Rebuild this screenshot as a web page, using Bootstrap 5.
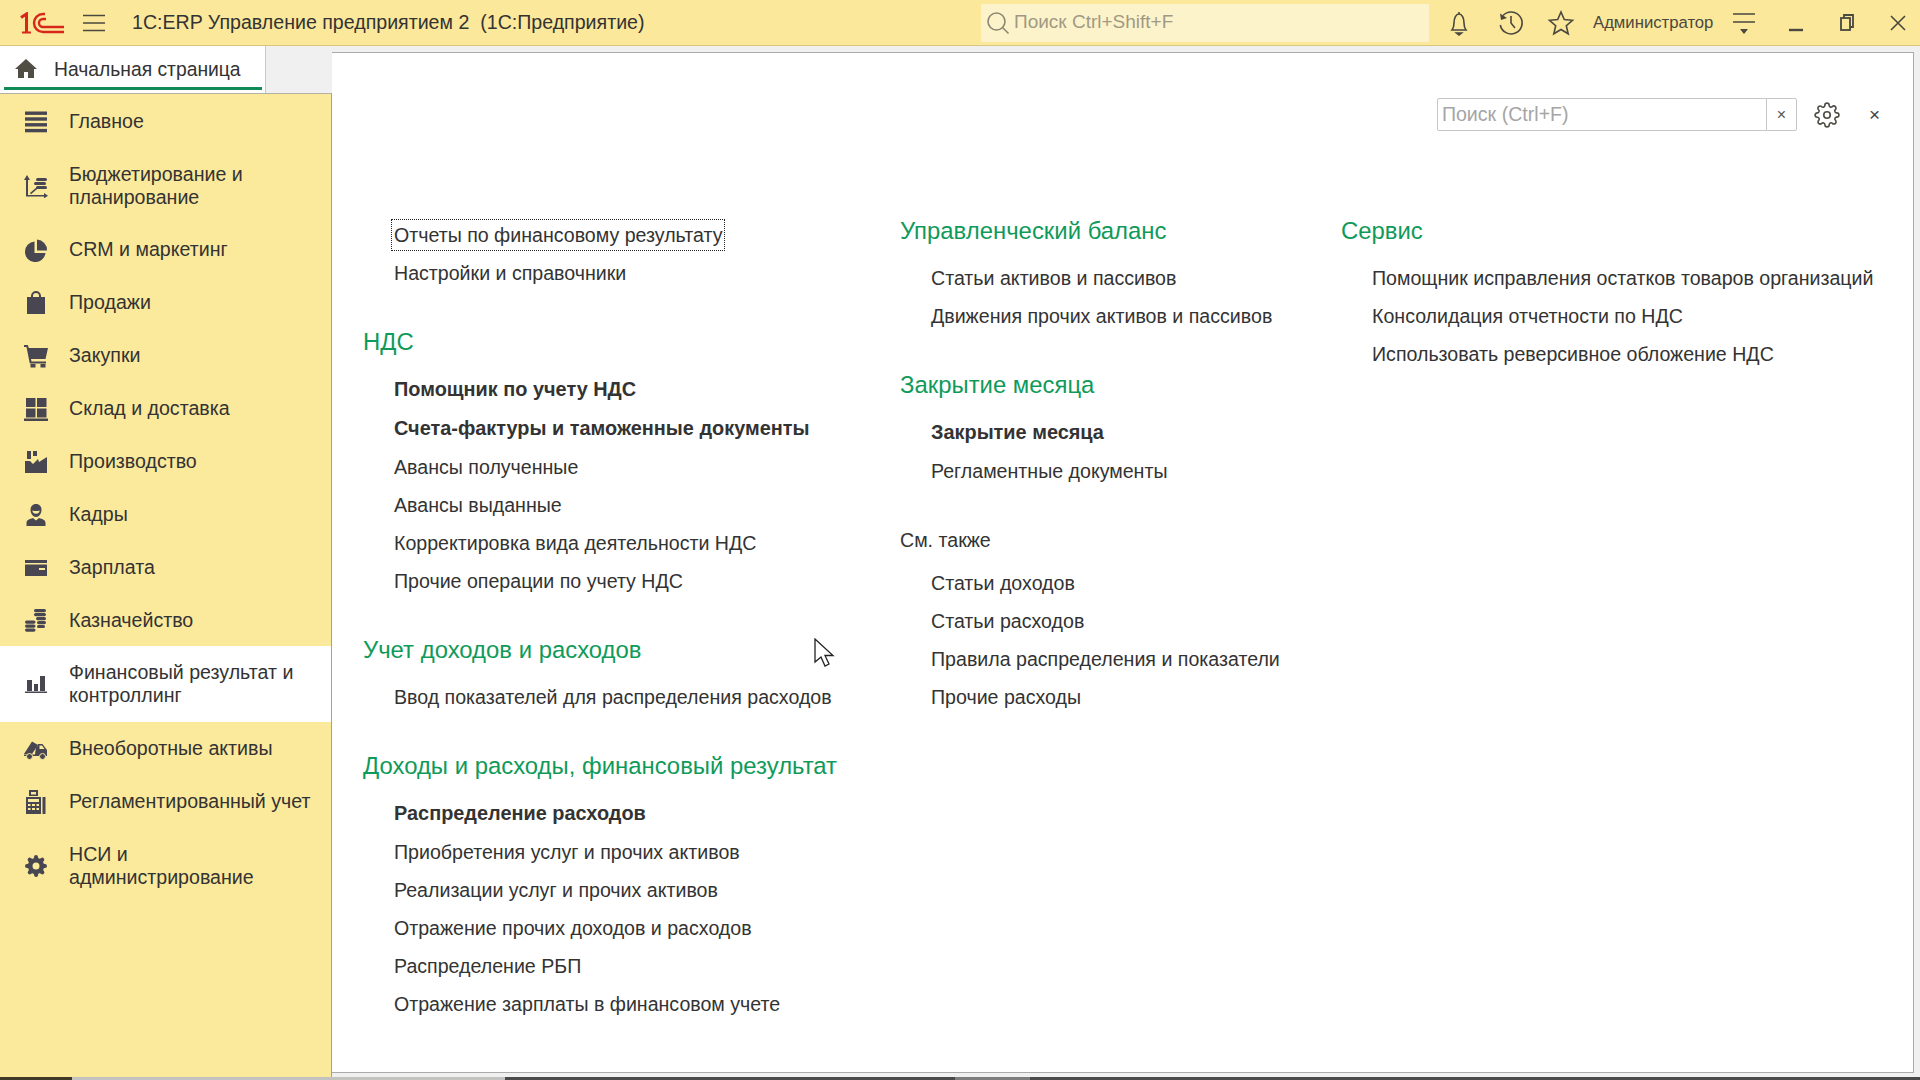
<!DOCTYPE html>
<html lang="ru">
<head>
  <meta charset="UTF-8" />
  <title>1С:ERP Управление предприятием 2</title>
  <link href="https://cdn.jsdelivr.net/npm/bootstrap@5.3.0/dist/css/bootstrap.min.css" rel="stylesheet"/>
  <script src="https://cdn.jsdelivr.net/npm/bootstrap@5.3.3/dist/js/bootstrap.bundle.min.js"></script>
  <style>
    html, body { height: 100%; }
    body { font-family: "Liberation Sans", Arial, sans-serif; color: #333; font-size: 19.6px; overflow: hidden; background: #fff; }
    .app-shell { height: 1080px; width: 1920px; position: relative; }

    .top-bar { height: 46px; background: #fbe89b; border-bottom: 1px solid #d9c77f; padding-left: 20px; }
    .top-logo { width: 44px; height: 22px; }
    .top-burger { width: 22px; height: 18px; margin-left: 19px; }
    .top-title { margin-left: 27px; font-size: 19.6px; white-space: pre; color: #333; width: 522px; }
    .top-search { width: 448px; height: 38px; margin-left: 327px; background: #fdf3cb; padding-left: 5px; color: #a09a84; font-size: 19px; }
    .top-search svg { width: 24px; height: 24px; margin-right: 4px; }
    .top-ico { width: 28px; height: 28px; color: #4a483f; flex: none; }
    .top-user { font-size: 16.7px; color: #4a483f; }

    .work-area { height: 1031px; }
    .left-col { width: 332px; }
    .tab-row { height: 48px; background: #f0f0f0; border-bottom: 1px solid #b4b1a4; }
    .home-tab { width: 266px; background: #fff; border-right: 1px solid #c9c9c9; padding: 2px 0 0 15px; position: relative; font-size: 19.3px; }
    .home-tab::after { content: ""; position: absolute; left: 4px; right: 3px; bottom: 3px; height: 3px; background: #128a57; }
    .home-tab svg { width: 22px; height: 22px; margin: -3px 17px 0 0; }

    .side-menu { background: #fbe99c; border-right: 1px solid #a6a28c; flex: 1; }
    .side-link { background: transparent; border: 0; border-radius: 0 !important; padding: 14.5px 20px 14.5px 24px; line-height: 23.5px; color: #333; font-size: 19.6px; }
    .side-link:first-child { padding-top: 15.5px; }
    .side-link:nth-child(2) { padding-bottom: 13.5px; }
    .side-link.active { background: #fff; color: #333; }
    .side-link svg { width: 24px; height: 24px; flex: none; margin-right: 21px; color: #484650; }

    .right-col { background: #f0f0f0; padding-top: 6px; min-width: 0; }
    .main-panel { background: #fff; border: 1px solid #aaa; border-left: 0; margin-right: 6px; height: 1021px; padding-top: 45px; }
    .page-tools { height: 33px; padding-right: 33px; }
    .find-box { width: 360px; height: 33px; }
    .find-box .form-control { border-color: #c6c6c6; border-radius: 2px 0 0 2px; padding: 0 4px; font-size: 19.6px; color: #999; }
    .find-box .form-control::placeholder { color: #a5a5a5; }
    .find-box .btn { width: 31px; padding: 0; border-color: #c6c6c6; border-radius: 0 2px 2px 0; color: #555; font-size: 16px; line-height: 1; }
    .tool-gear { width: 26px; height: 26px; margin-left: 17px; color: #4f4d44; }
    .tool-close { margin-left: 29px; color: #444; font-size: 19px; line-height: 1; }

    .menu-cols { padding-top: 85px; }
    .menu-col1 { width: 537px; padding-left: 31px; }
    .menu-col2 { width: 441px; padding-left: 31px; }
    .menu-col3 { padding-left: 31px; }
    .sec-head { height: 30px; line-height: 30px; font-size: 23.9px; color: #109a5a; margin: 34.5px 0 13.5px; white-space: nowrap; }
    .sec-head.first { margin-top: 0; margin-bottom: 13px; }
    .sec-plain { height: 30px; line-height: 30px; font-size: 19.6px; color: #333; margin: 34.5px 0 9.5px; }
    .menu-link { display: block; height: 38px; line-height: 38px; padding-left: 31px; color: #333; text-decoration: none; white-space: nowrap; }
    .menu-link.strong { font-weight: 700; font-size: 19.9px; height: 39px; }
    .focus-text { outline: 1px dotted #222; outline-offset: 2px; padding: 2px 0; }

    .task-strip { height: 3px; background: #4a4a4a; position: absolute; left: 0; right: 0; bottom: 0; }
    .strip-a { width: 72px; background: #3f3a27; }
    .strip-b { width: 433px; background: #c2c2c0; }
    .strip-c { width: 450px; }
    .strip-d { width: 75px; background: #7d7d7d; }
    .mouse-arrow { position: absolute; left: 813px; top: 638px; width: 22px; height: 30px; }
  </style>
</head>
<body>
  <div class="app-shell">
    <div class="top-bar d-flex align-items-center">
      <svg class="top-logo" viewBox="0 0 44 22" fill="none" stroke="#d7261a">
        <path d="M1 5.500L6.500 2v19" stroke-width="3"/>
        <path d="M2 20.500h9" stroke-width="2"/>
        <path d="M25 2h-2a9 9 0 0 0 0 18h21" stroke-width="2.400"/>
        <path d="M26 7h-3a4 4 0 0 0 0 8h21" stroke-width="2.400"/>
      </svg>
      <svg class="top-burger" viewBox="0 0 22 18" stroke="#4a483f" stroke-width="1.5"><path d="M0 1.500h22M0 9h22M0 16.500h22"/></svg>
      <div class="top-title">1С:ERP Управление предприятием 2  (1С:Предприятие)</div>
      <div class="top-search d-flex align-items-center">
        <svg viewBox="0 0 24 24" fill="none" stroke="#8b8671" stroke-width="1.600"><circle cx="10.500" cy="10.500" r="8.500"/><path d="M16.500 16.500l6 6"/></svg>
        Поиск Ctrl+Shift+F
      </div>
      <svg class="top-ico" style="margin-left:16px" viewBox="0 0 28 28" fill="none" stroke="currentColor" stroke-width="1.600"><path d="M14 3v2M7 21c1.500-2 2-3 2-7 0-5 2-9 5-9s5 4 5 9c0 4 .5 5 2 7z"/><path d="M11.500 24h5l-2.500 2z" fill="currentColor"/></svg>
      <svg class="top-ico" style="margin-left:24px" viewBox="0 0 28 28" fill="none" stroke="currentColor" stroke-width="1.600"><path d="M6 6.500A11 11 0 1 1 3.300 16"/><path d="M3 4.500l1 6.500 6-2z" fill="currentColor" stroke="none"/><path d="M14 7v7l4 5"/></svg>
      <svg class="top-ico" style="margin-left:22px" viewBox="0 0 28 28" fill="none" stroke="currentColor" stroke-width="1.600"><path d="M14 3l3.300 7.600 8.200.7-6.200 5.400 1.900 8.100-7.200-4.300-7.200 4.300 1.900-8.100-6.200-5.400 8.200-.7z"/></svg>
      <div class="top-user" style="margin-left:18px">Администратор</div>
      <svg class="top-ico" style="margin-left:17px" viewBox="0 0 28 28" fill="none" stroke="currentColor" stroke-width="1.600"><path d="M3 5h22M3 13h22"/><path d="M10 20h8l-4 5z" fill="currentColor" stroke="none"/></svg>
      <svg class="top-ico" style="margin-left:24px" viewBox="0 0 28 28" fill="none" stroke="currentColor" stroke-width="2.400"><path d="M7 21h14"/></svg>
      <svg class="top-ico" style="margin-left:23px" viewBox="0 0 28 28" fill="none" stroke="currentColor" stroke-width="1.800"><path d="M11 9V6h9v12h-3"/><rect x="8" y="9" width="9" height="12"/></svg>
      <svg class="top-ico" style="margin-left:23px" viewBox="0 0 28 28" fill="none" stroke="currentColor" stroke-width="1.600"><path d="M7 7l14 14M21 7L7 21"/></svg>
    </div>

    <div class="work-area d-flex">
      <div class="left-col d-flex flex-column">
        <div class="tab-row d-flex">
          <div class="home-tab d-flex align-items-center">
            <svg viewBox="0 0 22 22" fill="#4f4d44"><path d="M11 1L0 11h3v9h6v-6h4v6h6v-9h3z"/></svg>
            Начальная страница
          </div>
        </div>
        <div class="side-menu list-group list-group-flush">
          <a class="side-link list-group-item d-flex align-items-center" href="#">
            <svg viewBox="0 0 24 24" fill="currentColor"><rect x="1" y="1.500" width="22" height="3.400"/><rect x="1" y="7.300" width="22" height="3.400"/><rect x="1" y="13.100" width="22" height="3.400"/><rect x="1" y="18.900" width="22" height="3.400"/></svg>
            Главное
          </a>
          <a class="side-link list-group-item d-flex align-items-center" href="#">
            <svg viewBox="0 0 24 24" fill="currentColor"><path d="M3 1l3 5H4v15h16v-2l4 2.700-4 2.700v-2H2V6H0z"/><path d="M6 19l7-6 1 1.200-7 6z"/><rect x="12" y="4" width="11" height="3" rx="1.500"/><rect x="10" y="8" width="12" height="3" rx="1.500"/><rect x="12" y="12" width="11" height="3" rx="1.500"/></svg>
            <span>Бюджетирование и<br>планирование</span>
          </a>
          <a class="side-link list-group-item d-flex align-items-center" href="#">
            <svg viewBox="0 0 24 24" fill="currentColor"><path d="M10.500 3.500A10.300 10.300 0 1 0 21.500 15H10.500z"/><path d="M13 1.500V12.500H23A10.500 10.500 0 0 0 13 1.500z"/></svg>
            CRM и маркетинг
          </a>
          <a class="side-link list-group-item d-flex align-items-center" href="#">
            <svg viewBox="0 0 24 24" fill="currentColor"><path d="M3 6h18v17H3z"/><path d="M8 10V5a4 4 0 0 1 8 0v5" fill="none" stroke="currentColor" stroke-width="2"/></svg>
            Продажи
          </a>
          <a class="side-link list-group-item d-flex align-items-center" href="#">
            <svg viewBox="0 0 24 24" fill="currentColor"><path d="M0 1h3.800l1 3H24l-2.500 11H7l.5 2.500H22v2H5.800L2.500 3H0z"/><rect x="6.500" y="20" width="5" height="3.500"/><rect x="16.500" y="20" width="5" height="3.500"/></svg>
            Закупки
          </a>
          <a class="side-link list-group-item d-flex align-items-center" href="#">
            <svg viewBox="0 0 24 24" fill="currentColor"><rect x="2" y="1" width="9.500" height="9"/><rect x="13" y="1" width="9.500" height="9"/><rect x="2" y="11.500" width="9.500" height="9"/><rect x="13" y="11.500" width="9.500" height="9"/><rect y="21.500" width="24" height="2.500"/></svg>
            Склад и доставка
          </a>
          <a class="side-link list-group-item d-flex align-items-center" href="#">
            <svg viewBox="0 0 24 24" fill="currentColor"><rect x="3" y="1" width="4" height="8"/><rect x="9" y="1" width="4" height="5"/><path d="M1 23V11h5l3 3 5-5 1 3 8-5v16z"/></svg>
            Производство
          </a>
          <a class="side-link list-group-item d-flex align-items-center" href="#">
            <svg viewBox="0 0 24 24" fill="currentColor"><path d="M12 1c3.500 0 5.500 2.500 5.500 6s-2.500 7-5.500 7-5.500-3.500-5.500-7S8.500 1 12 1z"/><path d="M8.500 8.500c1 3 6 3 7 0v-1c-2 .7-5 .7-7 0z" fill="#fbe99c"/><path d="M2.500 23v-3c0-3 3-4 6.500-5l3 2.500 3-2.500c3.500 1 6.500 2 6.500 5v3z"/></svg>
            Кадры
          </a>
          <a class="side-link list-group-item d-flex align-items-center" href="#">
            <svg viewBox="0 0 24 24" fill="currentColor"><rect x="1" y="4" width="22" height="3"/><path d="M1 8.500h22V20H1zm14 3.500v2h6v-2z" fill-rule="evenodd"/></svg>
            Зарплата
          </a>
          <a class="side-link list-group-item d-flex align-items-center" href="#">
            <svg viewBox="0 0 24 24" fill="currentColor"><rect x="10" y="0" width="12" height="3.200" rx="1.600"/><rect x="10" y="4" width="12" height="3.200" rx="1.600"/><rect x="12" y="8" width="10" height="3.200" rx="1.600"/><rect x="1" y="11.500" width="10.500" height="3.200" rx="1.600"/><rect x="1" y="15.500" width="10.500" height="3.200" rx="1.600"/><rect x="1" y="19.500" width="10.500" height="3.200" rx="1.600"/><rect x="13" y="12" width="9" height="3.200" rx="1.600"/><rect x="13" y="16" width="8" height="3" rx="1.500"/></svg>
            Казначейство
          </a>
          <a class="side-link list-group-item active d-flex align-items-center" href="#">
            <svg viewBox="0 0 24 24" fill="currentColor"><rect x="3" y="8" width="5" height="11"/><rect x="10" y="12" width="4" height="7"/><rect x="16" y="4" width="5" height="15"/><rect x="1" y="19.500" width="22" height="1.500"/></svg>
            <span>Финансовый результат и<br>контроллинг</span>
          </a>
          <a class="side-link list-group-item d-flex align-items-center" href="#">
            <svg viewBox="0 0 24 24" fill="currentColor"><path d="M0 17L8 4.500l6 3.500-6 9z"/><path d="M12 10h1l1-3h4.500L23 13v6H0v-1.500h11z"/><path d="M15.500 8.500v3.500h5l-2.500-3.500z" fill="#fbe99c"/><circle cx="5.500" cy="19.500" r="3" stroke="#fbe99c"/><circle cx="18.500" cy="19.500" r="3" stroke="#fbe99c"/></svg>
            Внеоборотные активы
          </a>
          <a class="side-link list-group-item d-flex align-items-center" href="#">
            <svg viewBox="0 0 24 24" fill="currentColor"><path d="M2 7h15v17H2zM5 0h9v6H5z"/><rect x="18.500" y="7" width="3" height="17"/><path d="M7 2h5v2.500H7zM4 9h11v3H4zM4 14h2.500v2H4zm4 0h3v2H8zm4.500 0H15v2h-2.500zM4 18h2.500v2H4zm4 0h3v2H8zm4.500 0H15v2h-2.500z" fill="#fbe99c"/></svg>
            Регламентированный учет
          </a>
          <a class="side-link list-group-item d-flex align-items-center" href="#">
            <svg viewBox="0 0 24 24" fill="currentColor" fill-rule="evenodd"><path d="M19.400 15a1.650 1.650 0 0 0 .33 1.820l.06.06a2 2 0 0 1 0 2.830 2 2 0 0 1-2.830 0l-.06-.06a1.650 1.650 0 0 0-1.820-.33 1.650 1.650 0 0 0-1 1.510V21a2 2 0 0 1-2 2 2 2 0 0 1-2-2v-.09A1.650 1.650 0 0 0 9 19.400a1.650 1.650 0 0 0-1.820.33l-.06.06a2 2 0 0 1-2.830 0 2 2 0 0 1 0-2.830l.06-.06a1.650 1.650 0 0 0 .33-1.820 1.650 1.650 0 0 0-1.510-1H3a2 2 0 0 1-2-2 2 2 0 0 1 2-2h.09A1.650 1.650 0 0 0 4.600 9a1.650 1.650 0 0 0-.33-1.820l-.06-.06a2 2 0 0 1 0-2.830 2 2 0 0 1 2.830 0l.06.06a1.650 1.650 0 0 0 1.820.33H9a1.650 1.650 0 0 0 1-1.510V3a2 2 0 0 1 2-2 2 2 0 0 1 2 2v.09a1.650 1.650 0 0 0 1 1.510 1.650 1.650 0 0 0 1.820-.33l.06-.06a2 2 0 0 1 2.830 0 2 2 0 0 1 0 2.830l-.06.06a1.650 1.650 0 0 0-.33 1.820V9a1.650 1.650 0 0 0 1.510 1H21a2 2 0 0 1 2 2 2 2 0 0 1-2 2h-.09a1.650 1.650 0 0 0-1.510 1zM12 8.500a3.500 3.500 0 1 0 0 7 3.500 3.500 0 0 0 0-7z"/></svg>
            <span>НСИ и<br>администрирование</span>
          </a>
        </div>
      </div>

      <div class="right-col flex-grow-1">
        <div class="main-panel">
          <div class="page-tools d-flex align-items-center justify-content-end">
            <div class="find-box input-group flex-nowrap">
              <input type="text" class="form-control" placeholder="Поиск (Ctrl+F)"/>
              <button class="btn btn-light bg-white" type="button">×</button>
            </div>
            <svg class="tool-gear" viewBox="0 0 24 24" fill="none" stroke="currentColor" stroke-width="1.500"><circle cx="12" cy="12" r="3"/><path d="M19.400 15a1.650 1.650 0 0 0 .33 1.820l.06.06a2 2 0 0 1 0 2.830 2 2 0 0 1-2.830 0l-.06-.06a1.650 1.650 0 0 0-1.820-.33 1.650 1.650 0 0 0-1 1.510V21a2 2 0 0 1-2 2 2 2 0 0 1-2-2v-.09A1.650 1.650 0 0 0 9 19.400a1.650 1.650 0 0 0-1.820.33l-.06.06a2 2 0 0 1-2.830 0 2 2 0 0 1 0-2.830l.06-.06a1.650 1.650 0 0 0 .33-1.820 1.650 1.650 0 0 0-1.510-1H3a2 2 0 0 1-2-2 2 2 0 0 1 2-2h.09A1.650 1.650 0 0 0 4.600 9a1.650 1.650 0 0 0-.33-1.820l-.06-.06a2 2 0 0 1 0-2.830 2 2 0 0 1 2.830 0l.06.06a1.650 1.650 0 0 0 1.820.33H9a1.650 1.650 0 0 0 1-1.510V3a2 2 0 0 1 2-2 2 2 0 0 1 2 2v.09a1.650 1.650 0 0 0 1 1.510 1.650 1.650 0 0 0 1.820-.33l.06-.06a2 2 0 0 1 2.830 0 2 2 0 0 1 0 2.830l-.06.06a1.650 1.650 0 0 0-.33 1.820V9a1.650 1.650 0 0 0 1.510 1H21a2 2 0 0 1 2 2 2 2 0 0 1-2 2h-.09a1.650 1.650 0 0 0-1.510 1z"/></svg>
            <span class="tool-close">×</span>
          </div>

          <div class="menu-cols d-flex">
            <div class="menu-col1">
              <a class="menu-link" href="#"><span class="focus-text">Отчеты по финансовому результату</span></a>
              <a class="menu-link" href="#">Настройки и справочники</a>
              <div class="sec-head">НДС</div>
              <a class="menu-link strong" href="#">Помощник по учету НДС</a>
              <a class="menu-link strong" href="#">Счета-фактуры и таможенные документы</a>
              <a class="menu-link" href="#">Авансы полученные</a>
              <a class="menu-link" href="#">Авансы выданные</a>
              <a class="menu-link" href="#">Корректировка вида деятельности НДС</a>
              <a class="menu-link" href="#">Прочие операции по учету НДС</a>
              <div class="sec-head">Учет доходов и расходов</div>
              <a class="menu-link" href="#">Ввод показателей для распределения расходов</a>
              <div class="sec-head">Доходы и расходы, финансовый результат</div>
              <a class="menu-link strong" href="#">Распределение расходов</a>
              <a class="menu-link" href="#">Приобретения услуг и прочих активов</a>
              <a class="menu-link" href="#">Реализации услуг и прочих активов</a>
              <a class="menu-link" href="#">Отражение прочих доходов и расходов</a>
              <a class="menu-link" href="#">Распределение РБП</a>
              <a class="menu-link" href="#">Отражение зарплаты в финансовом учете</a>
            </div>
            <div class="menu-col2">
              <div class="sec-head first">Управленческий баланс</div>
              <a class="menu-link" href="#">Статьи активов и пассивов</a>
              <a class="menu-link" href="#">Движения прочих активов и пассивов</a>
              <div class="sec-head">Закрытие месяца</div>
              <a class="menu-link strong" href="#">Закрытие месяца</a>
              <a class="menu-link" href="#">Регламентные документы</a>
              <div class="sec-plain">См. также</div>
              <a class="menu-link" href="#">Статьи доходов</a>
              <a class="menu-link" href="#">Статьи расходов</a>
              <a class="menu-link" href="#">Правила распределения и показатели</a>
              <a class="menu-link" href="#">Прочие расходы</a>
            </div>
            <div class="menu-col3">
              <div class="sec-head first">Сервис</div>
              <a class="menu-link" href="#">Помощник исправления остатков товаров организаций</a>
              <a class="menu-link" href="#">Консолидация отчетности по НДС</a>
              <a class="menu-link" href="#">Использовать реверсивное обложение НДС</a>
            </div>
          </div>
        </div>
      </div>
    </div>

    <div class="task-strip d-flex">
      <div class="strip-a"></div>
      <div class="strip-b"></div>
      <div class="strip-c"></div>
      <div class="strip-d"></div>
    </div>
    <svg class="mouse-arrow" viewBox="0 0 22 30"><path d="M2 1v23l6-5 4 9 4-2-4-8.500h8z" fill="#fff" stroke="#222" stroke-width="1.300"/></svg>
  </div>
</body>
</html>
